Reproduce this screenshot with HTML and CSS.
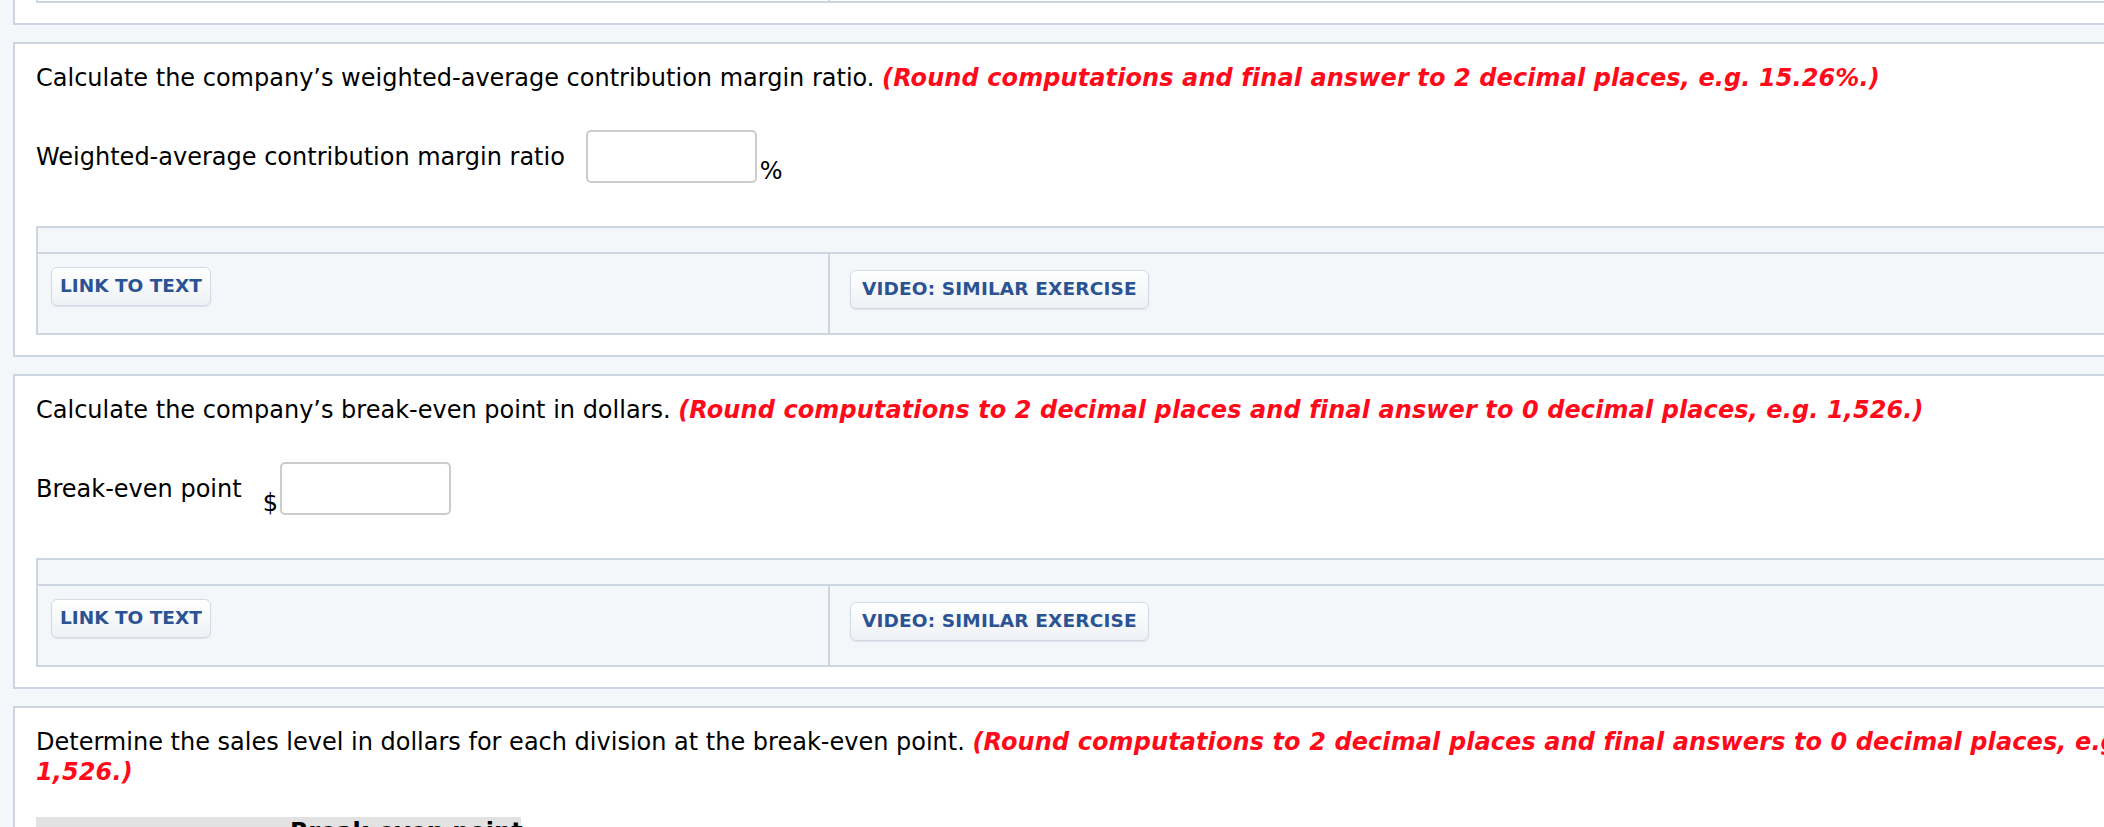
FILE: index.html
```html
<!DOCTYPE html>
<html lang="en">
<head>
<meta charset="utf-8">
<title>Break-even analysis</title>
<link rel="stylesheet" href="styles.css">
</head>
<body>
<div class="page">
  <section class="card card--tail">
    <div class="links-tail"><div class="links-tail__cell"></div><div class="links-tail__cell links-tail__cell--last"></div></div>
  </section>

  <section class="card">
    <p class="question">Calculate the company’s weighted-average contribution margin ratio. <em class="hint">(Round computations and final answer to 2 decimal places, e.g. 15.26%.)</em></p>
    <div class="answer-row">
      <label class="answer-label" for="wacm">Weighted-average contribution margin ratio</label>
      <span class="field"><input id="wacm" class="answer-input" type="text"><span class="unit unit--after">%</span></span>
    </div>
    <div class="links">
      <div class="links__head"></div>
      <div class="links__body">
        <div class="links__cell links__cell--text"><button class="btn btn--text" type="button">LINK TO TEXT</button></div>
        <div class="links__cell links__cell--video"><button class="btn" type="button">VIDEO: SIMILAR EXERCISE</button></div>
      </div>
    </div>
  </section>

  <section class="card">
    <p class="question">Calculate the company’s break-even point in dollars. <em class="hint">(Round computations to 2 decimal places and final answer to 0 decimal places, e.g. 1,526.)</em></p>
    <div class="answer-row">
      <label class="answer-label" for="bep">Break-even point</label>
      <span class="field"><span class="unit unit--before">$</span><input id="bep" class="answer-input answer-input--money" type="text"></span>
    </div>
    <div class="links">
      <div class="links__head"></div>
      <div class="links__body">
        <div class="links__cell links__cell--text"><button class="btn btn--text" type="button">LINK TO TEXT</button></div>
        <div class="links__cell links__cell--video"><button class="btn" type="button">VIDEO: SIMILAR EXERCISE</button></div>
      </div>
    </div>
  </section>

  <section class="card">
    <p class="question">Determine the sales level in dollars for each division at the break-even point. <em class="hint">(Round computations to 2 decimal places and final answers to 0 decimal places, e.g. 1,526.)</em></p>
    <div class="result-head"><span class="result-head__title">Break-even point</span></div>
  </section>
</div>
</body>
</html>
```

FILE: styles.css
```css
html, body {
  margin: 0;
  padding: 0;
  overflow: hidden;
  background: #f4f7fa;
}

.page {
  width: 2200px;
  font-family: "DejaVu Sans", Verdana, sans-serif;
  font-size: 24px;
  color: #000;
}

.card {
  margin: 0 0 17px 13px;
  background: #fff;
  border: 2px solid #cdd5e0;
  padding: 19px 21px 20px 21px;
}

.card--tail {
  border-top: none;
  padding-top: 0;
}

.links-tail {
  display: grid;
  grid-template-columns: 792px 1fr;
  border: 2px solid #cdd5e0;
  border-top: none;
  height: 1px;
  background: #fff;
}

.links-tail__cell {
  border-right: 2px solid #cdd5e0;
}

.links-tail__cell--last {
  border-right: none;
}

.question {
  margin: 0;
  line-height: 30px;
}

.hint {
  color: #ff0a1a;
  font-weight: bold;
  font-style: italic;
  letter-spacing: 0.1px;
}

.answer-row {
  display: flex;
  align-items: center;
  gap: 21px;
  margin-top: 37px;
}

.answer-label {
  line-height: 30px;
}

.field {
  display: flex;
  align-items: flex-end;
}

.answer-input {
  box-sizing: border-box;
  width: 171px;
  height: 53px;
  margin: 0;
  border: 2px solid #cccccc;
  border-radius: 5px;
  background: #fff;
  font: inherit;
  padding: 0 8px;
}

.unit {
  line-height: 1;
}

.unit--after {
  margin-left: 3px;
}

.unit--before {
  margin-right: 2px;
}

.links {
  margin-top: 43px;
  border: 2px solid #cdd5e0;
  background: #f4f7fa;
}

.links__head {
  height: 24px;
  border-bottom: 2px solid #cdd5e0;
}

.links__body {
  display: grid;
  grid-template-columns: 792px 1fr;
  height: 79px;
}

.links__cell {
  box-sizing: border-box;
}

.links__cell--text {
  border-right: 2px solid #cdd5e0;
  padding: 13px 0 0 13px;
}

.links__cell--video {
  padding: 16px 0 0 20px;
}

.btn {
  box-sizing: border-box;
  height: 39px;
  margin: 0;
  padding: 0 11px;
  border: 1.5px solid #d3dae3;
  border-radius: 6px;
  background: linear-gradient(#ffffff, #eef1f5);
  box-shadow: 0 1px 1px rgba(120, 135, 160, 0.18);
  color: #2b5393;
  font-family: "DejaVu Sans", Verdana, sans-serif;
  font-size: 18.5px;
  font-weight: bold;
  letter-spacing: 0.15px;
  line-height: 1;
  cursor: pointer;
}

.btn--text {
  padding: 0 8px;
  letter-spacing: 0;
}

.result-head {
  margin-top: 30px;
  width: 485px;
  height: 40px;
  background: #e2e2e2;
  line-height: 30px;
  font-weight: bold;
  padding-left: 254px;
  box-sizing: border-box;
  white-space: nowrap;
}
```
